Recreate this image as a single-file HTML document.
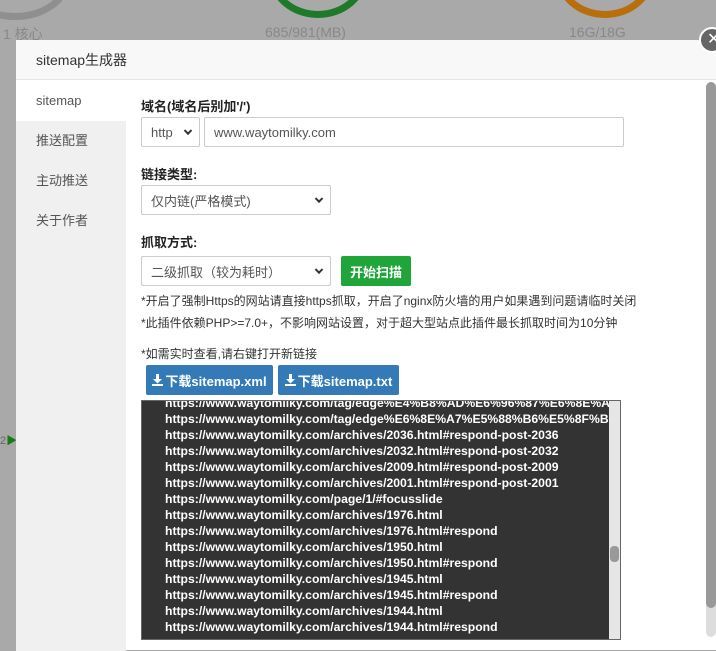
<!DOCTYPE html>
<html><head><meta charset="utf-8"><style>
*{box-sizing:border-box;margin:0;padding:0}
body{width:716px;height:637px;overflow:hidden;background:#a9a9a9;font-family:"Liberation Sans","Noto Sans CJK SC",sans-serif;position:relative;color:#333}
.ring{position:absolute;border-radius:50%;border:7px solid}
.bgt{position:absolute;top:24px;font-size:14px;color:#888}
.modal{position:absolute;left:16px;top:40px;width:710px;height:610px;background:#fff}
.hd{height:40px;background:#f8f8f8;border-bottom:1px solid #e6e6e6;font-size:14px;line-height:40px;padding-left:20px;color:#333}
.side{position:absolute;left:0;top:41px;width:110px;height:570px;background:#f0f0f0}
.side div{height:40px;line-height:40px;padding-left:20px;font-size:13px;color:#555}
.side div.a{background:#fff}
.lbl{position:absolute;font-size:13px;color:#222;font-weight:bold}
.box{position:absolute;border:1px solid #ccc;background:#fff;font-size:13px;color:#555;padding-left:9px;display:flex;align-items:center;border-radius:2px}
.chev{position:absolute;right:8px;top:50%;width:6px;height:6px;border-right:2px solid #333;border-bottom:2px solid #333;transform:translateY(-70%) rotate(45deg)}
.btn{position:absolute;color:#fff;font-size:13px;font-weight:bold;border-radius:2px;display:flex;align-items:center;justify-content:center}
.btn svg{margin-right:2px}
.note{position:absolute;font-size:12px;color:#333;white-space:nowrap}
.ta{position:absolute;left:141px;top:400px;width:480px;height:240px;background:#333;overflow:hidden;border:1px solid #666}
.ta div{color:#fff;font-size:12.2px;line-height:16px;white-space:nowrap;padding-left:23px;font-weight:bold}
</style></head><body>
<div class="ring" style="left:-40px;top:-60px;width:110px;height:80px;border-color:#8f8f8f"></div>
<div class="ring" style="left:268px;top:-70px;width:100px;height:88px;border-color:#1e7a2a"></div>
<div class="ring" style="left:555px;top:-70px;width:100px;height:88px;border-color:#b86e0a"></div>
<div class="bgt" style="left:3px">1 核心</div>
<div class="bgt" style="left:265px">685/981(MB)</div>
<div class="bgt" style="left:569px">16G/18G</div>
<div style="position:absolute;left:0;top:432px;font-size:11px;color:#666">2<span style="color:#1a7a1a">▶</span></div>
<div class="modal">
<div class="hd">sitemap生成器</div>
<div class="side"><div class="a">sitemap</div><div>推送配置</div><div>主动推送</div><div>关于作者</div></div>
</div>
<div style="position:absolute;left:699px;top:27px;width:26px;height:26px;border-radius:50%;background:#666;border:2px solid #fff;color:#fff;font-size:16px;line-height:21px;padding-left:6px">✕</div>
<div style="position:absolute;left:706px;top:82px;width:10px;height:555px;background:#ddd;border-radius:5px"></div>
<div style="position:absolute;left:706px;top:82px;width:10px;height:526px;background:#999;border-radius:5px"></div>
<div class="lbl" style="left:141px;top:96px">域名(域名后别加'/')</div>
<div class="box" style="left:141px;top:117px;width:59px;height:30px">http<span class="chev"></span></div>
<div class="box" style="left:204px;top:117px;width:420px;height:30px">www.waytomilky.com</div>
<div class="lbl" style="left:141px;top:164px">链接类型:</div>
<div class="box" style="left:141px;top:185px;width:190px;height:30px">仅内链(严格模式)<span class="chev"></span></div>
<div class="lbl" style="left:141px;top:232px">抓取方式:</div>
<div class="box" style="left:141px;top:256px;width:190px;height:30px">二级抓取（较为耗时）<span class="chev"></span></div>
<div class="btn" style="left:341px;top:256px;width:70px;height:30px;background:#20a53a">开始扫描</div>
<div class="note" style="left:141px;top:292px">*开启了强制Https的网站请直接https抓取，开启了nginx防火墙的用户如果遇到问题请临时关闭</div>
<div class="note" style="left:141px;top:314px">*此插件依赖PHP>=7.0+，不影响网站设置，对于超大型站点此插件最长抓取时间为10分钟</div>
<div class="note" style="left:141px;top:345px">*如需实时查看,请右键打开新链接</div>
<div class="btn" style="left:146px;top:365px;width:127px;height:30px;background:#337ab7"><svg width="11" height="12" viewBox="0 0 11 12"><path d="M4 0h3v5h3L5.5 9.5 1 5h3z M0 10h11v2H0z" fill="#fff"/></svg>下载sitemap.xml</div>
<div class="btn" style="left:278px;top:365px;width:121px;height:30px;background:#337ab7"><svg width="11" height="12" viewBox="0 0 11 12"><path d="M4 0h3v5h3L5.5 9.5 1 5h3z M0 10h11v2H0z" fill="#fff"/></svg>下载sitemap.txt</div>
<div class="ta"><div style="margin-top:-6px">https://www.waytomilky.com/tag/edge%E4%B8%AD%E6%96%87%E6%8E%A0%E5</div>
<div>https://www.waytomilky.com/tag/edge%E6%8E%A7%E5%88%B6%E5%8F%B0%E5</div>
<div>https://www.waytomilky.com/archives/2036.html#respond-post-2036</div>
<div>https://www.waytomilky.com/archives/2032.html#respond-post-2032</div>
<div>https://www.waytomilky.com/archives/2009.html#respond-post-2009</div>
<div>https://www.waytomilky.com/archives/2001.html#respond-post-2001</div>
<div>https://www.waytomilky.com/page/1/#focusslide</div>
<div>https://www.waytomilky.com/archives/1976.html</div>
<div>https://www.waytomilky.com/archives/1976.html#respond</div>
<div>https://www.waytomilky.com/archives/1950.html</div>
<div>https://www.waytomilky.com/archives/1950.html#respond</div>
<div>https://www.waytomilky.com/archives/1945.html</div>
<div>https://www.waytomilky.com/archives/1945.html#respond</div>
<div>https://www.waytomilky.com/archives/1944.html</div>
<div>https://www.waytomilky.com/archives/1944.html#respond</div>
<div style="position:absolute;left:467px;top:0;width:11px;height:240px;background:#e6e6e6;padding:0"></div>
<div style="position:absolute;left:468px;top:145px;width:9px;height:16px;background:#999;border-radius:4px;padding:0"></div>
</div>
</body></html>
